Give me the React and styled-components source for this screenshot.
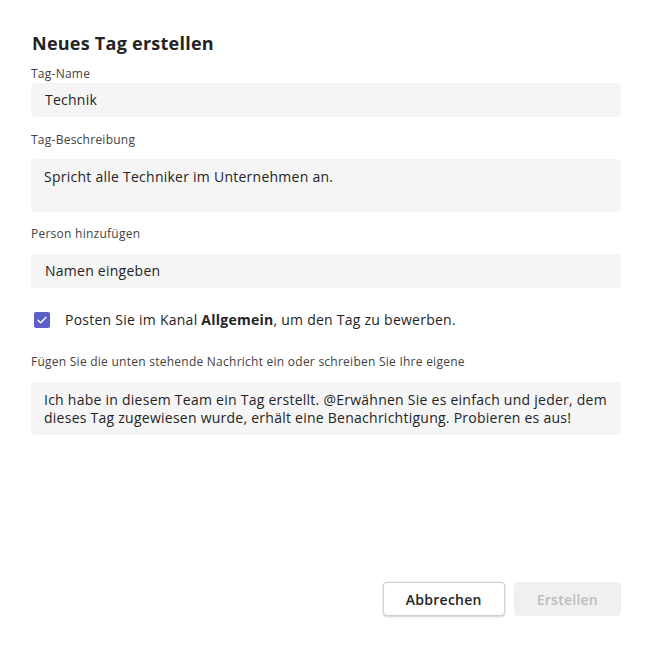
import React from "react";
import styled, { createGlobalStyle } from "styled-components";

const Global = createGlobalStyle`
  html, body { margin: 0; padding: 0; background: #ffffff; }
  body {
    font-family: "Open Sans", "Noto Sans", sans-serif;
    color: #242424;
    letter-spacing: 0.25px;
  }
  * { box-sizing: border-box; }
`;

const Dialog = styled.div`
  width: 654px;
  min-height: 648px;
  padding: 31px 33px 32px 31px;
  display: flex;
  flex-direction: column;
`;

const Title = styled.h1`
  margin: 0 0 0 1px;
  font-size: 18px;
  line-height: 24px;
  font-weight: 700;
  color: #242424;
`;

const Label = styled.label`
  display: block;
  font-size: 12px;
  line-height: 16px;
  color: #424242;
  margin-top: ${(p) => p.$top}px;
  margin-bottom: ${(p) => p.$bottom}px;
`;

const Box = styled.div`
  background: #f5f5f5;
  border-radius: 4px;
  font-size: 14px;
  color: #242424;
  padding: ${(p) => (p.$multi ? "9px 12px 7px 13px" : "0 12px 0 14px")};
  line-height: ${(p) => (p.$multi ? "18px" : "34px")};
  height: ${(p) => (p.$multi ? "53px" : "34px")};
`;

const CheckRow = styled.div`
  display: flex;
  align-items: center;
  gap: 15px;
  margin: 22px 0 0 3px;
  font-size: 14px;
  line-height: 20px;
  color: #242424;
`;

const Check = styled.span`
  width: 16px;
  height: 16px;
  border-radius: 2px;
  background: #5b5fc7;
  display: flex;
  align-items: center;
  justify-content: center;
  flex-shrink: 0;
`;

const Footer = styled.div`
  margin-top: auto;
  display: flex;
  justify-content: flex-end;
  gap: 9px;
`;

const Button = styled.button`
  height: 34px;
  padding: 0 22px;
  border-radius: 4px;
  font-family: inherit;
  letter-spacing: inherit;
  font-size: 14px;
  font-weight: 600;
  border: 1px solid ${(p) => (p.$disabled ? "#f0f0f0" : "#d1d1d1")};
  background: ${(p) => (p.$disabled ? "#f0f0f0" : "#ffffff")};
  color: ${(p) => (p.$disabled ? "#bdbdbd" : "#242424")};
  box-shadow: ${(p) =>
    p.$disabled ? "none" : "0 1px 2px rgba(0,0,0,0.14), 0 0 2px rgba(0,0,0,0.12)"};
`;

export default function App() {
  return (
    <>
      <Global />
      <Dialog>
        <Title>Neues Tag erstellen</Title>
        <Label $top={11} $bottom={1}>Tag-Name</Label>
        <Box>Technik</Box>
        <Label $top={15} $bottom={11}>Tag-Beschreibung</Label>
        <Box $multi>Spricht alle Techniker im Unternehmen an.</Box>
        <Label $top={14} $bottom={12}>Person hinzufügen</Label>
        <Box>Namen eingeben</Box>
        <CheckRow>
          <Check>
            <svg width="10" height="8" viewBox="0 0 10 8" fill="none">
              <path d="M1 4.2 L3.7 6.8 L9 1.2" stroke="#fff" strokeWidth="1.3" strokeLinecap="round" strokeLinejoin="round" />
            </svg>
          </Check>
          <span>
            Posten Sie im Kanal <b>Allgemein</b>, um den Tag zu bewerben.
          </span>
        </CheckRow>
        <Label $top={24} $bottom={12}>
          Fügen Sie die unten stehende Nachricht ein oder schreiben Sie Ihre eigene
        </Label>
        <Box $multi>
          Ich habe in diesem Team ein Tag erstellt. @Erwähnen Sie es einfach und jeder, dem
          dieses Tag zugewiesen wurde, erhält eine Benachrichtigung. Probieren es aus!
        </Box>
        <Footer>
          <Button>Abbrechen</Button>
          <Button $disabled>Erstellen</Button>
        </Footer>
      </Dialog>
    </>
  );
}
